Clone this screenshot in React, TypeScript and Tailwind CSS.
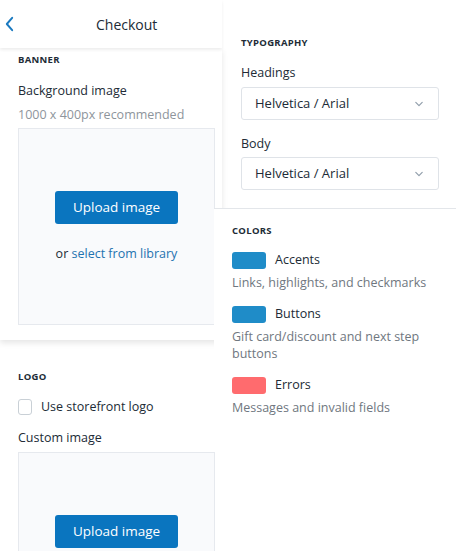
const font = { fontFamily: '"Open Sans", "Noto Sans", sans-serif' };

function Chevron({ className }: { className?: string }) {
  return (
    <svg viewBox="0 0 20 20" className={className} fill="none" stroke="currentColor" strokeWidth={1.5} strokeLinecap="round" strokeLinejoin="round">
      <path d="M6 8l4 4 4-4" />
    </svg>
  );
}

function UploadBox({ children, className }: { children: React.ReactNode; className?: string }) {
  return (
    <div className={`shrink-0 mr-[7px] border border-[#e6e9ee] bg-[#f9fafc] flex flex-col items-center ${className ?? ""}`}>
      {children}
    </div>
  );
}

function UploadButton() {
  return (
    <button className="w-[123px] h-[33px] shrink-0 rounded-[3px] bg-[#0a75bf] text-white text-[13.5px]">Upload image</button>
  );
}

function Select({ value }: { value: string }) {
  return (
    <div className="h-[33px] mr-[29px] rounded-[3px] border border-[#dfe3e8] flex items-center justify-between pl-[13px] pr-[11px] text-[13px] text-[#212b36]">
      <span>{value}</span>
      <Chevron className="w-[16px] h-[16px] text-[#919eab]" />
    </div>
  );
}

function ColorRow({ color, label, hint }: { color: string; label: string; hint: React.ReactNode }) {
  return (
    <div className="mb-[14px]">
      <div className="flex items-center gap-[9px] h-[18px]">
        <div className="w-[34px] h-[17px] rounded-[3px]" style={{ backgroundColor: color }} />
        <span className="text-[12.5px] text-[#212b36]">{label}</span>
      </div>
      <p className="mt-[5px] text-[12.5px] leading-[17px] text-[#6f7780]">{hint}</p>
    </div>
  );
}

export default function App() {
  return (
    <div className="w-[468px] h-[551px] overflow-hidden bg-white flex" style={font}>
      <div className="w-[222px] shrink-0 flex flex-col">
        <div className="relative z-[2] h-[48px] shrink-0 flex items-center bg-white shadow-[0_2px_3px_rgba(0,0,0,0.07)]">
          <svg viewBox="0 0 12 18" className="ml-[4px] w-[11px] h-[16px] text-[#1b7ac0]" fill="none" stroke="currentColor" strokeWidth={2.2} strokeLinecap="round" strokeLinejoin="round">
            <path d="M9 2L3 9l6 7" />
          </svg>
          <span className="ml-[81px] text-[14px] text-[#212b36]">Checkout</span>
        </div>
        <div className="relative z-[1] shrink-0 pl-[18px] pt-[5px] pb-[15px] bg-white shadow-[0_3px_6px_rgba(0,0,0,0.1)]">
          <p className="text-[9.5px] font-bold tracking-[0.3px] text-[#212b36] leading-[14px]">BANNER</p>
          <p className="mt-[15px] text-[12.5px] leading-[18px] text-[#212b36]">Background image</p>
          <p className="mt-[6px] text-[12.5px] leading-[18px] text-[#8e959c]">1000 x 400px recommended</p>
          <UploadBox className="mt-[4px] h-[197px] pt-[62px]">
            <UploadButton />
            <p className="mt-[21px] text-[12.5px] text-[#212b36]">
              or <span className="text-[#1f73b0]">select from library</span>
            </p>
          </UploadBox>
        </div>
        <div className="shrink-0 pl-[18px] pt-[30px]">
          <p className="text-[9.5px] font-bold tracking-[0.3px] text-[#212b36] leading-[14px]">LOGO</p>
          <label className="mt-[14px] flex items-center gap-[9px]">
            <span className="w-[14px] h-[16px] rounded-[3px] border border-[#c9d0d6] bg-white" />
            <span className="text-[12.5px] text-[#212b36]">Use storefront logo</span>
          </label>
          <p className="mt-[12px] text-[12.5px] leading-[18px] text-[#212b36]">Custom image</p>
          <UploadBox className="mt-[5px] h-[120px] pt-[62px]">
            <UploadButton />
          </UploadBox>
        </div>
      </div>
      <div className="flex-1 flex flex-col">
        <div className="pl-[19px] pt-[36px] pb-[18px]">
          <p className="text-[9.5px] font-bold tracking-[0.3px] text-[#212b36] leading-[14px]">TYPOGRAPHY</p>
          <p className="mt-[14px] text-[12.5px] leading-[18px] text-[#212b36]">Headings</p>
          <div className="mt-[5px]"><Select value="Helvetica / Arial" /></div>
          <p className="mt-[15px] text-[12.5px] leading-[18px] text-[#212b36]">Body</p>
          <div className="mt-[4px]"><Select value="Helvetica / Arial" /></div>
        </div>
        <div className="relative z-[3] -ml-[8px] mr-[12px] bg-white border-t border-[#e3e6ea] pl-[18px] pt-[15px] pb-[20px]">
          <p className="text-[9.5px] font-bold tracking-[0.3px] text-[#212b36] leading-[14px]">COLORS</p>
          <div className="mt-[13px]">
            <ColorRow color="#1f8cc8" label="Accents" hint="Links, highlights, and checkmarks" />
            <ColorRow color="#1f8cc8" label="Buttons" hint={<>Gift card/discount and next step<br />buttons</>} />
            <ColorRow color="#ff6b6e" label="Errors" hint="Messages and invalid fields" />
          </div>
        </div>
      </div>
    </div>
  );
}
